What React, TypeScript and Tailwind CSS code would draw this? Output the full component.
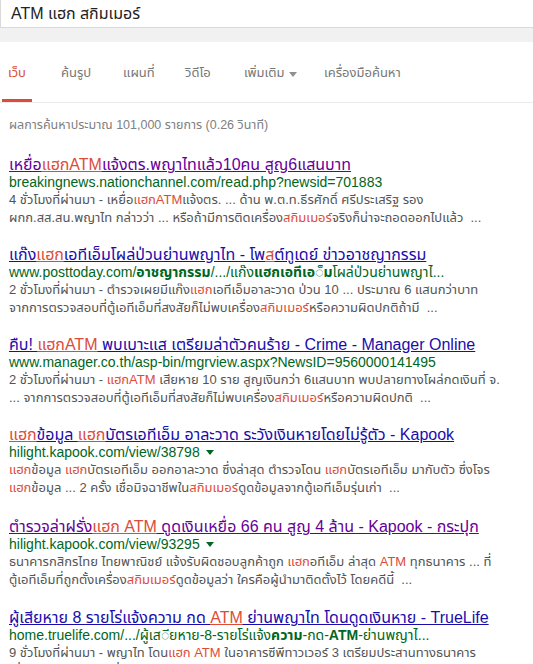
import { ReactNode } from 'react';

const red = (t: string) => <span className="text-[#dd4b39]">{t}</span>;
const b = (t: string) => <span className="font-bold">{t}</span>;

interface Result {
  visited?: boolean;
  title: ReactNode;
  url: ReactNode;
  arrow?: boolean;
  mt?: string;
  lines: ReactNode[];
}

const results: Result[] = [
  {
    visited: true,
    title: <>เหยื่อ{red('แฮกATM')}แจ้งตร.พญาไทแล้ว10คน สูญ6แสนบาท</>,
    url: 'breakingnews.nationchannel.com/read.php?newsid=701883',
    lines: [
      <>4 ชั่วโมงที่ผ่านมา - เหยื่อ{red('แฮกATM')}แจ้งตร. ... ด้าน พ.ต.ท.ธีรศักดิ์ ศรีประเสริฐ รอง</>,
      <>ผกก.สส.สน.พญาไท กล่าวว่า ... หรือถ้ามีการติดเครื่อง{red('สกิมเมอร์')}จริงก็น่าจะถอดออกไปแล้ว &nbsp;...</>,
    ],
  },
  {
    title: <>แก๊ง{red('แฮก')}เอทีเอ็มโผล่ป่วนย่านพญาไท - โพ{red('ส')}ต์ทูเดย์ ข่าวอาชญากรรม</>,
    url: <>www.posttoday.com/{b('อาชญากรรม')}/.../แก๊ง{b('แฮกเอทีเอ')}◌็{b('ม')}โผล่ป่วนย่านพญาไ...</>,
    lines: [
      <>2 ชั่วโมงที่ผ่านมา - ตำรวจเผยมีแก๊ง{red('แฮก')}เอทีเอ็มอาละวาด ป่วน 10 ... ประมาณ 6 แสนกว่าบาท</>,
      <>จากการตรวจสอบที่ตู้เอทีเอ็มที่สงสัยก็ไม่พบเครื่อง{red('สกิมเมอร์')}หรือความผิดปกติถ้ามี &nbsp;...</>,
    ],
  },
  {
    title: <>คืบ! {red('แฮกATM')} พบเบาะแส เตรียมล่าตัวคนร้าย - Crime - Manager Online</>,
    url: 'www.manager.co.th/asp-bin/mgrview.aspx?NewsID=9560000141495',
    lines: [
      <>2 ชั่วโมงที่ผ่านมา - {red('แฮกATM')} เสียหาย 10 ราย สูญเงินกว่า 6แสนบาท พบปลายทางโผล่กดเงินที่ จ.</>,
      <>... จากการตรวจสอบที่ตู้เอทีเอ็มที่สงสัยก็ไม่พบเครื่อง{red('สกิมเมอร์')}หรือความผิดปกติ &nbsp;...</>,
    ],
  },
  {
    title: <>{red('แฮก')}ข้อมูล {red('แฮก')}บัตรเอทีเอ็ม อาละวาด ระวังเงินหายโดยไม่รู้ตัว - Kapook</>,
    url: 'hilight.kapook.com/view/38798',
    arrow: true,
    lines: [
      <>{red('แฮก')}ข้อมูล {red('แฮก')}บัตรเอทีเอ็ม ออกอาละวาด ซึ่งล่าสุด ตำรวจโดน {red('แฮก')}บัตรเอทีเอ็ม มากับตัว ซึ่งโจร</>,
      <>{red('แฮก')}ข้อมูล ... 2 ครั้ง เชื่อมิจฉาชีพใน{red('สกิมเมอร์')}ดูดข้อมูลจากตู้เอทีเอ็มรุ่นเก่า &nbsp;...</>,
    ],
  },
  {
    visited: true,
    mt: 'mt-[2px]',
    title: <>ตำรวจล่าฝรั่ง{red('แฮก ATM')} ดูดเงินเหยื่อ 66 คน สูญ 4 ล้าน - Kapook - กระปุก</>,
    url: 'hilight.kapook.com/view/93295',
    arrow: true,
    lines: [
      <>ธนาคารกสิกรไทย ไทยพาณิชย์ แจ้งรับผิดชอบลูกค้าถูก {red('แฮก')}อทีเอ็ม ล่าสุด {red('ATM')} ทุกธนาคาร ... ที่</>,
      <>ตู้เอทีเอ็มที่ถูกตั้งเครื่อง{red('สกิมเมอร์')}ดูดข้อมูลว่า ใครคือผู้นำมาติดตั้งไว้ โดยคดีนี้ &nbsp;...</>,
    ],
  },
  {
    mt: 'mt-[1px]',
    title: <>ผู้เสียหาย 8 รายโร่แจ้งความ กด {red('ATM')} ย่านพญาไท โดนดูดเงินหาย - TrueLife</>,
    url: <>home.truelife.com/.../ผู้เส◌ียหาย-8-รายโร่แจ้ง{b('ความ')}-กด-{b('ATM')}-ย่านพญาไ...</>,
    lines: [
      <>9 ชั่วโมงที่ผ่านมา - พญาไท โดน{red('แฮก ATM')} ในอาคารซีพีทาวเวอร์ 3 เตรียมประสานทางธนาคาร</>,
      <>เพื่อตรวจสอบ ลูกค้าที่ใช้ {red('ATM')} ตู้ดังกล่าว ได้รับความเสียหาย {red('ATM')} ย่านพญาไท {red('สกิมเมอร์')} ได้ไป</>,
    ],
  },
];

const tabs = [
  { label: 'เว็บ', w: 'w-[53px]', active: true },
  { label: 'ค้นรูป', w: 'w-[62px]' },
  { label: 'แผนที่', w: 'w-[62px]' },
  { label: 'วิดีโอ', w: 'w-[59px]' },
  { label: 'เพิ่มเติม', w: 'w-[80px]', more: true },
  { label: 'เครื่องมือค้นหา', w: 'w-[100px]' },
];

export default function App() {
  return (
    <div className="w-[533px] h-[664px] overflow-hidden bg-white font-['Liberation_Sans','Noto_Sans_Thai',Arial,sans-serif]">
      {/* search box */}
      <div className="h-[28px] border-b border-l border-[#d9d9d9] pl-[10px] flex items-center text-[16px] leading-[20px] text-[#222]">
        ATM แฮก สกิมเมอร์
      </div>
      <div className="h-[14px] bg-[#f1f1f1]" />

      {/* tabs */}
      <div className="h-[61px] border-b border-[#ebebeb] flex pl-[2px] text-[13px] text-[#777]">
        {tabs.map(t => (
          <div key={t.label} className={`${t.w} shrink-0 flex`}>
            <div
              className={`h-[60px] px-[6px] pt-[22px] leading-[18px] whitespace-nowrap flex items-start gap-[4px] ${
                t.active ? 'border-b-[3px] border-[#dd4b39] text-[#dd4b39]' : ''
              }`}
            >
              {t.label}
              {t.more && (
                <span className="mt-[8px] border-x-[4px] border-x-transparent border-t-[5px] border-t-[#909090]" />
              )}
            </div>
          </div>
        ))}
      </div>

      {/* stats */}
      <div className="pl-[9px] pt-[13px] leading-[18px] text-[12.5px] text-[#808080] whitespace-nowrap">
        ผลการค้นหาประมาณ 101,000 รายการ (0.26 วินาที)
      </div>

      {/* results */}
      <div className="pl-[9px] pt-[21px] flex flex-col gap-[18px]">
        {results.map((r, i) => (
          <div key={i} className={`whitespace-nowrap ${r.mt ?? ''}`}>
            <div
              className={`h-[20px] leading-[20px] text-[16px] underline [&_span]:underline ${
                r.visited ? 'text-[#660099]' : 'text-[#1a0dab]'
              }`}
            >
              {r.title}
            </div>
            <div className="h-[16px] leading-[16px] mt-[-1px] text-[14px] text-[#006621] flex items-center gap-[6px]">
              <span>{r.url}</span>
              {r.arrow && (
                <span className="border-x-[4px] border-x-transparent border-t-[5px] border-t-[#006621]" />
              )}
            </div>
            <div className="pt-[1px] text-[13px] leading-[18px] text-[#545454]">
              {r.lines.map((l, j) => (
                <div key={j} className="h-[18px]">
                  {l}
                </div>
              ))}
            </div>
          </div>
        ))}
      </div>
    </div>
  );
}
